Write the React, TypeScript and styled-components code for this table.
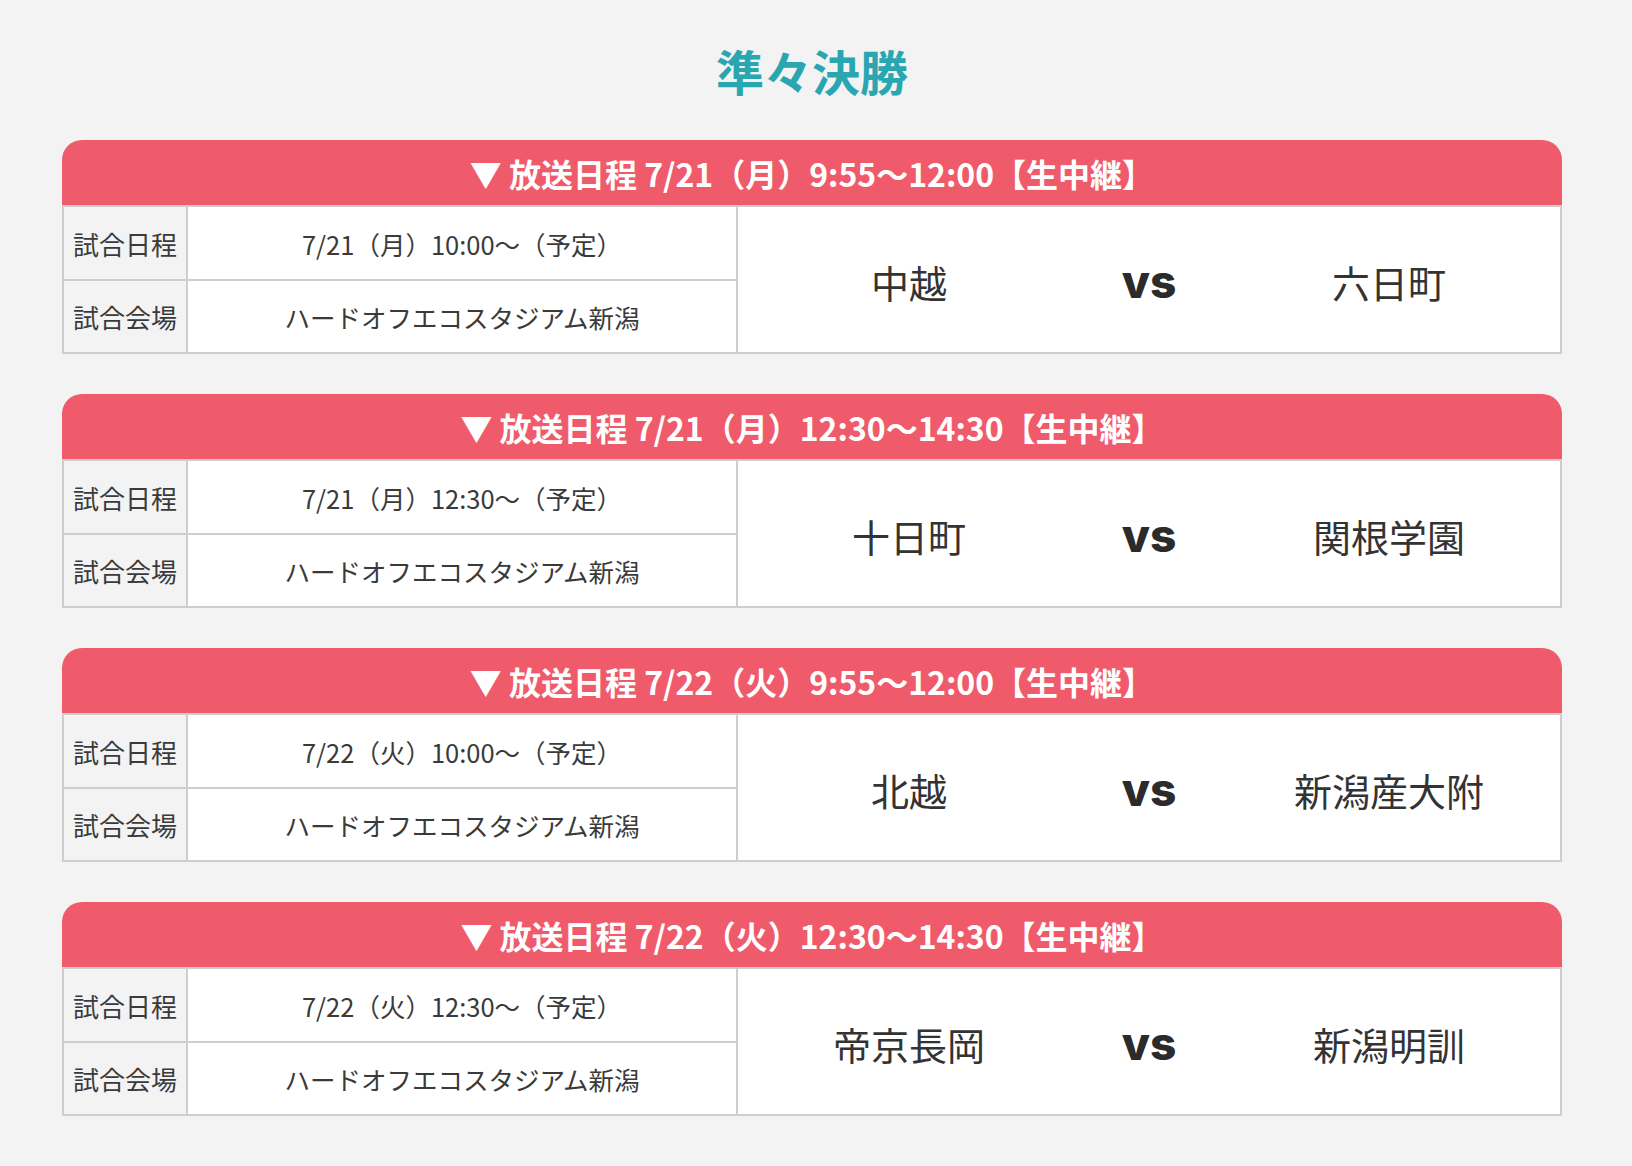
import React from "react";
import styled, { createGlobalStyle } from "styled-components";

const GlobalStyle = createGlobalStyle`
  html, body {
    margin: 0;
    padding: 0;
    background: #f3f3f3;
  }
  body {
    font-family: "Noto Sans CJK JP", "Noto Sans", sans-serif;
    color: #333;
  }
`;

const Page = styled.div`
  width: 1500px;
  margin-left: 62px;
  padding-bottom: 50px;
`;

const Title = styled.h2`
  margin: 34px 0 34px;
  font-size: 48px;
  line-height: 72px;
  font-weight: 700;
  color: #2aa6b1;
  text-align: center;
`;

const List = styled.div`
  display: flex;
  flex-direction: column;
  gap: 40px;
`;

const Card = styled.section`
  display: flex;
  flex-direction: column;
`;

const Header = styled.div`
  height: 65px;
  border-radius: 20px 20px 0 0;
  background: #f05b6b;
  color: #fff;
  font-size: 32px;
  font-weight: 700;
  display: flex;
  align-items: center;
  justify-content: center;
`;

const Arrow = styled.span`
  margin-right: 7px;
`;

const Grid = styled.div`
  display: grid;
  grid-template-columns: 122px 548px 1fr;
  grid-template-rows: 72px 71px;
  gap: 2px;
  padding: 2px;
  background: #cecece;
`;

const Label = styled.div`
  background: #f3f3f3;
  display: flex;
  align-items: center;
  justify-content: center;
  font-size: 26px;
  color: #3a3a3a;
`;

const Value = styled.div`
  background: #fff;
  display: flex;
  align-items: center;
  justify-content: center;
  font-size: 25.5px;
  color: #3a3a3a;
`;

const Match = styled.div`
  grid-column: 3;
  grid-row: 1 / span 2;
  background: #fff;
  display: grid;
  grid-template-columns: repeat(3, 240px);
  justify-content: center;
  align-items: center;
`;

const Team = styled.div`
  text-align: center;
  font-size: 38px;
  color: #333;
  padding-top: 3px;
`;

const Versus = styled.div`
  text-align: center;
  font-family: Inter, "Noto Sans", sans-serif;
  font-weight: 800;
  font-size: 46px;
  color: #2b2b2b;
  padding-top: 2px;
`;

type Game = {
  broadcast: string;
  date: string;
  venue: string;
  home: string;
  away: string;
};

const games: Game[] = [
  {
    broadcast: "放送日程 7/21（月）9:55〜12:00【生中継】",
    date: "7/21（月）10:00〜（予定）",
    venue: "ハードオフエコスタジアム新潟",
    home: "中越",
    away: "六日町",
  },
  {
    broadcast: "放送日程 7/21（月）12:30〜14:30【生中継】",
    date: "7/21（月）12:30〜（予定）",
    venue: "ハードオフエコスタジアム新潟",
    home: "十日町",
    away: "関根学園",
  },
  {
    broadcast: "放送日程 7/22（火）9:55〜12:00【生中継】",
    date: "7/22（火）10:00〜（予定）",
    venue: "ハードオフエコスタジアム新潟",
    home: "北越",
    away: "新潟産大附",
  },
  {
    broadcast: "放送日程 7/22（火）12:30〜14:30【生中継】",
    date: "7/22（火）12:30〜（予定）",
    venue: "ハードオフエコスタジアム新潟",
    home: "帝京長岡",
    away: "新潟明訓",
  },
];

export default function App() {
  return (
    <>
      <GlobalStyle />
      <Page>
        <Title>準々決勝</Title>
        <List>
          {games.map((g, i) => (
            <Card key={i}>
              <Header>
                <Arrow>▼</Arrow>
                {g.broadcast}
              </Header>
              <Grid>
                <Label>試合日程</Label>
                <Value>{g.date}</Value>
                <Match>
                  <Team>{g.home}</Team>
                  <Versus>vs</Versus>
                  <Team>{g.away}</Team>
                </Match>
                <Label>試合会場</Label>
                <Value>{g.venue}</Value>
              </Grid>
            </Card>
          ))}
        </List>
      </Page>
    </>
  );
}
